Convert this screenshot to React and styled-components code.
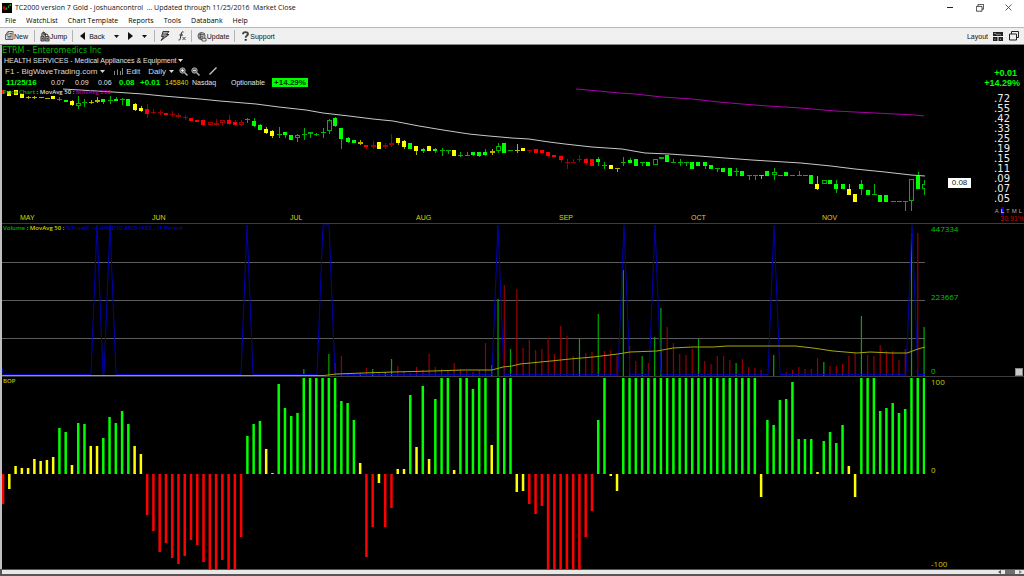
import React from "react";
import styled, { createGlobalStyle } from "styled-components";

const GREEN = "#00ff00";
const YELLOW = "#ffff00";
const RED = "#ff0000";
const HUES = { g: GREEN, y: YELLOW, r: RED };
const DIM = { g: "#00b400", y: "#b4b400", r: "#a00000" };

const Global = createGlobalStyle`
  * { box-sizing: border-box; }
  html, body, #root { height: 100%; }
  body {
    margin: 0;
    background: #000;
    font-family: "Liberation Sans", Arial, sans-serif;
    font-size: 8px;
    overflow: hidden;
  }
  button {
    margin: 0;
    padding: 0;
    border: 0;
    background: none;
    color: inherit;
    font: inherit;
    white-space: nowrap;
  }
  svg { display: block; flex: none; }
`;

/* ---------- window frame ---------- */

const Window = styled.div`
  height: 100vh;
  display: flex;
  flex-direction: column;
  background: #fff;
`;

const TitleBar = styled.header`
  display: flex;
  align-items: center;
  height: 15px;
  padding: 0 12px 0 2px;
  gap: 3px;
  font-family: "Open Sans", sans-serif;
  font-size: 7px;
  line-height: 15px;
  color: #111;
`;

const Caption = styled.h1`
  margin: 0;
  font: inherit;
  white-space: pre;
`;

const WindowButtons = styled.div`
  margin-left: auto;
  display: flex;
  gap: 22px;
`;

const WindowButton = styled.button`
  display: grid;
  place-items: center;
  width: 7px;
  height: 12px;
`;

const MenuBar = styled.nav`
  display: flex;
  align-items: center;
  height: 12px;
  padding-left: 5px;
  gap: 10px;
  font-family: "Open Sans", sans-serif;
  font-size: 7px;
  line-height: 10px;
  color: #000;
`;

const ToolBar = styled.div`
  display: flex;
  align-items: center;
  height: 18px;
  padding: 0 5px;
  border-top: 1px solid #b8b8b8;
  border-bottom: 1px solid #888;
  background: #f0f0f0;
  color: #111;
  font-size: 7px;
`;

const ToolGroup = styled.div`
  display: flex;
  align-items: center;
  gap: ${(p) => p.$gap || 0}px;
  padding: 0 ${(p) => p.$pad || 6}px;
  border-right: ${(p) => (p.$last ? "0" : "1px solid #b4b4b4")};
  height: 12px;
  &:first-child { padding-left: 0; }
`;

const ToolButton = styled.button`
  display: flex;
  align-items: center;
  gap: ${(p) => p.$gap || 0}px;
`;

const LayoutGroup = styled.div`
  margin-left: auto;
  display: flex;
  align-items: center;
  gap: 6px;
`;

const Charts = styled.main`
  flex: 1;
  min-height: 0;
  display: grid;
  grid-template-rows: 178fr 153fr 193fr;
  border-left: 2px solid #c0c0c0;
  background: #000;
`;

const Panel = styled.section`
  min-height: 0;
  display: flex;
  border-top: ${(p) => (p.$divided ? "1px solid #3c3c3c" : "0")};
`;

const Column = styled.div`
  flex: 1;
  min-width: 0;
  display: flex;
  flex-direction: column;
`;

const Axis = styled.div`
  position: relative;
  width: 99px;
  display: flex;
  flex-direction: column;
`;

const Plot = styled.div`
  position: relative;
  flex: 1;
  min-width: 0;
  min-height: 0;
  & > svg {
    width: 100%;
    height: 100%;
  }
`;

/* ---------- price panel ---------- */

const Company = styled.h2`
  margin: 0;
  height: 11px;
  font: 8px/11px "DejaVu Sans", sans-serif;
  color: #00b400;
`;

const Sector = styled.button`
  display: flex;
  align-items: center;
  gap: 2px;
  height: 9px;
  padding-left: 2px;
  font-size: 7px;
  line-height: 9px;
  color: #e0e0e0;
`;

const ChartTools = styled.div`
  display: flex;
  align-items: center;
  height: 12px;
  padding-left: 3px;
  font-size: 8px;
  color: #d8d8d8;
`;

const ChartTool = styled.button`
  display: flex;
  align-items: center;
  gap: 3px;
  margin-right: ${(p) => p.$after || 0}px;
`;

const Quote = styled.div`
  display: flex;
  align-items: center;
  height: 11px;
  padding-left: 4px;
  font-size: 7px;
  line-height: 9px;
  color: #e0e0e0;
`;

const QuoteCell = styled.span`
  width: ${(p) => p.$width}px;
  white-space: nowrap;
  color: ${(p) => p.$color || "inherit"};
  font-weight: ${(p) => (p.$strong ? 700 : 400)};
  font-size: ${(p) => (p.$strong ? 8 : 7)}px;
`;

const Badge = styled.span`
  width: 36px;
  background: ${GREEN};
  color: #003c00;
  font-weight: 700;
  font-size: 8px;
  text-align: center;
`;

const Legend = styled.div`
  position: absolute;
  top: 0;
  left: 1px;
  font: 600 6px/9px "Open Sans", sans-serif;
  white-space: pre;
  color: #ddd;
`;

const Tint = styled.span`
  color: ${(p) => p.$color};
`;

const Months = styled.div`
  display: grid;
  grid-template-columns: 132fr 138fr 126fr 143fr 132fr 131fr 103fr;
  height: 11px;
  padding-left: 18px;
  font: 7px/11px "Liberation Sans", sans-serif;
  color: #d8d800;
`;

const Change = styled.div`
  padding: 23px 4px 6px 0;
  text-align: right;
  font-size: 9px;
  font-weight: 700;
  line-height: 10px;
  color: ${GREEN};
`;

const ChangeLine = styled.div`
  padding-right: ${(p) => (p.$inset ? 3 : 0)}px;
`;

const PriceScale = styled.ol`
  margin: 0;
  padding: 0 14px 3px 0;
  list-style: none;
  text-align: right;
  font: 10px/10px "DejaVu Sans", sans-serif;
  color: #f0f0f0;
`;

const ScaleModes = styled.div`
  display: flex;
  justify-content: flex-end;
  gap: 2px;
  padding-right: 2px;
  font-size: 6px;
  line-height: 8px;
  color: #aaa;
`;

const Mode = styled.button`
  background: ${(p) => (p.$active ? "#0000ff" : "none")};
  color: ${(p) => (p.$active ? "#fff" : "inherit")};
`;

const Percent = styled.div`
  text-align: right;
  font-size: 7px;
  line-height: 7px;
  color: #d00000;
`;

const LastPrice = styled.output`
  position: absolute;
  right: 53px;
  bottom: 35px;
  width: 23px;
  height: 10px;
  background: #fff;
  color: #222;
  text-align: center;
  font-size: 8px;
  line-height: 10px;
`;

/* ---------- lower panels ---------- */

const ScaleColumn = styled(Axis)`
  justify-content: space-between;
  padding-left: 6px;
  font: 8px/10px "Open Sans", sans-serif;
  color: ${(p) => p.$color};
  & > span:nth-child(2) { margin-bottom: 6px; }
`;

const Grip = styled.button`
  && {
    position: absolute;
    right: 1px;
    bottom: 0;
    width: 8px;
    height: 8px;
    background: #c8c8c8;
    border: 1px solid #888;
  }
`;

const ScrollBar = styled.footer`
  display: flex;
  justify-content: flex-end;
  align-items: center;
  height: 7px;
  padding-right: 2px;
  gap: 4px;
  border: 1px solid #555;
  border-width: 1px 0 2px 2px;
  background: #e8e8e8;
`;

const Thumb = styled.span`
  width: 10px;
  height: 4px;
  background: #707070;
`;

/* ---------- data ---------- */

const PITCH = 6.265;
const at = (i) => 1 + i * PITCH;

// colour, body top, body bottom, wick top, wick bottom; an "h" marks a hollow body
const CANDLES = `r 15 27|y 18 33|y 15 31|y 26 39|y 36 39 33 42|y 36 39 33 42|y 36 40|y 38 41|y 33 42|g 41 45 37 47|g 45 52|y 48 60 44 62|gh 54 62 33 73|g 51 55 41 66|y 50 53 45 56|yh 45 52 36 54|g 43 51 41 56|g 44 47 32 56|g 43 47 36 49|g 43 45 40 60|g 42 62|y 57 74 55 77|y 69 78 63 80|r 72 88 56 98|r 82 84 73 86|r 81 84 74 90|r 84 90|r 87 89 79 96|rh 90 97 84 99|r 96 99 90 105|r 99 108|r 105 111|r 105 121 101 123|rh 112 121|rh 115 121 102 123|rh 106 115 104 122|r 105 117 89 119|r 111 121 105 124|rh 110 120 105 124|g 103 106 98 113|g 108 123 99 125|g 121 134 117 136|y 132 144 126 146|y 139 152 135 158|g 147 149 125 158|g 142 150 140 158|g 150 164|gh 150 160 146 170|g 146 150 129 165|gh 142 147 142 158|g 146 149 143 152|g 140 143 129 158|gh 104 139 102 147|g 99 123 97 126|g 129 161 129 192|g 160 171 157 174|g 164 174|yh 170 175 164 181|r 180 186 180 191|rh 180 185 169 191|y 171 192|rh 180 185 173 191|rh 173 180 147 187|y 159 174 159 180|y 169 186 166 191|g 173 191|y 184 197 184 211|g 192 198 189 204|y 184 198|g 191 197 189 203|g 194 197 189 212|g 195 197 195 206|y 196 212|g 209 212 201 216|g 209 212 202 212|g 202 210 200 214|g 202 212 200 215|g 202 211 192 213|yh 197 203 193 210|gh 184 197 173 204|g 173 203|g 195 198|y 194 197 178 204|y 189 198|r 195 198 195 203|r 191 203|r 195 203|r 202 213 200 217|r 209 217|r 214 225 210 232|r 230 233 222 251|r 231 234 222 234|r 222 225 209 232|r 223 233 220 241|r 222 242|g 222 232 216 243|g 239 242 230 251|y 240 251|y 248 251 250 261|g 230 233 215 242|g 224 233 220 234|g 222 242|g 231 234 231 242|g 231 242|gh 223 241|gh 216 223|g 209 232|g 231 234 222 234|g 231 234 222 243|g 231 234 231 242|g 231 251|g 231 242|g 231 242 231 251|g 240 251|g 249 252 249 261|g 250 261|g 250 273|g 259 262 250 272|g 259 273|g 270 273 270 285|g 270 273 270 285|y 270 273 270 283|g 259 272|gh 261 271 250 285|g 270 273|g 261 273|g 270 273|g 270 273 259 273|g 270 273|g 271 298|y 296 312 274 315|gh 284 298|g 284 298|g 296 312 286 325|g 296 312|y 312 329 298 331|y 328 352|g 296 312 285 329|g 314 329|g 327 330 296 330|g 329 352|g 329 352|g 349 352|g 349 352|g 349 352 349 377|gh 283 349 283 377|g 272 312 261 312|gh 297 312 285 329`
  .split("|")
  .map((row) => {
    const [kind, ...levels] = row.split(" ");
    const [top, bottom, high = top, low = bottom] = levels.map((v) => Math.round(Number(v) / 3) - 3);
    return { hue: kind[0], hollow: kind[1] === "h", top, bottom, high, low };
  });

const BOP = `r-30 y-15 y8 y6 y6 y15 y13 y14 y17 g46 g42 y9 g51 g50 y28 y28 g36 g57 g51 g63 g50 y28 y20 r-41 r-57 r-78 r-69 r-84 r-90 r-82 r-66 r-71 r-88 r-96 r-96 r-86 r-96 r-96 r-63 g38 g50 g53 y25 y1 g90 g66 g58 g61 g96 g96 g96 g96 g96 g96 g73 g71 g54 y11 r-83 r-53 y-9 r-53 r-34 y5 y5 g79 y27 g88 y15 g75 g96 g96 y4 g96 g96 g85 g96 g96 y29 g96 g96 g96 y-18 y-17 r-30 r-40 r-32 r-96 r-96 r-96 r-96 r-96 r-96 r-63 r-37 g54 g96 y-2 y-17 g96 g96 g96 g96 g96 g96 g96 g96 g96 g96 g96 g96 g96 g96 g96 g96 g96 g96 g96 g96 g96 g96 y-23 g54 g49 g74 g75 g92 g35 g35 g35 y2 g33 g42 g31 g49 y8 y-23 g96 g96 g96 g63 g66 g71 g61 g65 g96 g96 g96`
  .split(" ")
  .map((s) => ({ hue: s[0], value: Number(s.slice(1)) }));

const FIRST_VOLUME = 39;
const VOLUME = `g1 g0 g0 g0 g0 g2 g0 g0 g0 g7 g0 g0 g1 g22 r13 r20 r3 r3 g3 r8 g7 r3 g4 g17 r10 r5 r3 r9 r6 r22 r9 r7 r5 r13 r7 r5 r4 r6 r33 g11 g77 r91 g27 r87 r28 r36 r26 r27 r38 r22 r50 r40 r20 g37 r23 r24 g62 r25 r26 r20 g106 r30 r15 g20 r13 g39 g68 r49 r33 r22 r21 r27 g37 r15 r12 r20 r20 r16 g13 r17 r9 r8 r6 r0 g21 r0 r4 r6 r9 r7 r7 r18 g14 r10 r10 r12 r20 r23 g60 r21 r20 r31 r25 r25 r16 r27 g142 r143 g49`
  .split(" ")
  .map((s) => ({ hue: s[0], value: Number(s.slice(1)) }));

const AVG_50 =
  "61,1 78,2 111,4 141,6 161,8 198,11 218,13 254,16 277,19 304,22 321,25 347,28 371,31 391,33 417,38 441,42 467,46 487,48 510,50 527,51 547,54 563,56 590,59 620,61 643,65 667,66 697,68 723,70 750,72 766,73 799,75 829,78 853,81 883,84 909,87 923,88";
const AVG_200 =
  "574,1 597,3 617,5 633,6 660,9 690,11 717,14 740,16 766,18 799,20 833,23 873,25 913,27 922,28";
const VOLUME_AVG =
  "0,151.5 322,151.5 334,150 361,149 391,148 430,147 461,146 490,146 501,143 510,142 518,140 549,137 568,135 591,133 616,130 628,128 655,127 671,124 690,123 711,123 725,122 793,122 811,124 831,127 855,129 868,128 890,129 905,129 916,125 923,123";
const FLOOR = 150.5;
const SIGNAL_PEAKS = [[95, 95], [108, 108], [245, 245], [321, 327], [496, 496], [622, 622], [653, 653], [772, 772], [910, 910]];
const SIGNAL = [
  "0,144",
  `1,${FLOOR}`,
  ...SIGNAL_PEAKS.map(([a, b]) => `${a - 6},${FLOOR} ${a},1 ${b},1 ${b + 6},${FLOOR}`),
  `923,${FLOOR}`,
].join(" ");

const PRICES = [".72", ".55", ".42", ".33", ".25", ".19", ".15", ".11", ".09", ".07", ".05"];
const MONTHS = ["MAY", "JUN", "JUL", "AUG", "SEP", "OCT", "NOV"];
const MENUS = ["File", "WatchList", "Chart Template", "Reports", "Tools", "Databank", "Help"];

/* ---------- icons ---------- */

const Caret = ({ color = "currentColor" }) => (
  <svg width="5" height="3" viewBox="0 0 5 3">
    <path d="M0 0h5L2.5 3z" fill={color} />
  </svg>
);

const Arrow = ({ back }) => (
  <svg width="5" height="8" viewBox="0 0 5 8">
    <path d={back ? "M5 0v8L0 4z" : "M0 0v8l5-4z"} fill="#111" />
  </svg>
);

const AppIcon = () => (
  <svg width="10" height="10" viewBox="0 0 10 10">
    <path d="M0 0h10v10H0z" fill="#000" />
    <path d="M1 3.5h2V6H1zM2 6v2" fill="#c00000" stroke="#c00000" strokeWidth=".6" />
    <path d="M3.5 7V4.500h1.500V7zM6 5V2.500h1V5zM7.500 3V1h1.500v2z" fill="#00b000" />
  </svg>
);

const NewIcon = () => (
  <svg width="9" height="10" viewBox="0 0 9 10">
    <path d="M3 .5h5v8H.5V4zM3 .5V4H.500M2.500 5.500h4M2.500 7h4M4.500 2.500h2.500M4.500 4h2.500" fill="#ddd" stroke="#444" strokeWidth=".8" />
  </svg>
);

const JumpIcon = () => (
  <svg width="10" height="11" viewBox="0 0 11 11">
    <path d="M2 5V2l2-1.500L6 2v3M1 5.500h3.500v5H1zM5.500 5.500H10v5H5.500z" fill="#999" stroke="#333" strokeWidth=".9" />
    <path d="M4 3h4l1 2M2 8h1.500M7 8h2M3 1.500h2" fill="none" stroke="#222" />
  </svg>
);

const FlashIcon = () => (
  <svg width="10" height="10" viewBox="0 0 10 10">
    <path d="M3 .5h6L6.500 3.500H9L1 9.500l2.500-4H1.500z" fill="#aaa" stroke="#222" strokeWidth=".9" />
    <path d="M2 3h5M3 5h4" stroke="#333" strokeWidth=".6" />
  </svg>
);

const FunctionIcon = () => (
  <svg width="8" height="10" viewBox="0 0 8 10">
    <path d="M5.500 1C4 .3 3.500 1.500 3.200 3L2.300 7.500C2 9 1.300 9.300.5 9M1.500 4h3.500" fill="none" stroke="#222" />
    <path d="M4.500 6l3 3M7.500 6l-3 3" fill="none" stroke="#222" strokeWidth=".8" />
  </svg>
);

const UpdateIcon = () => (
  <svg width="10" height="11" viewBox="0 0 11 11">
    <circle cx="5" cy="5" r="4" fill="#bbb" stroke="#444" strokeWidth=".8" />
    <path d="M1.500 4c2-2 4 1 7-1.500M2 7c2-2 3 0 5-2M5 1c-2 2-2 6 0 8" fill="none" stroke="#333" strokeWidth=".8" />
    <path d="M5.500 7.500h4.500v3H5.500z" fill="#eee" stroke="#333" strokeWidth=".8" />
  </svg>
);

const SupportIcon = () => (
  <svg width="7" height="10" viewBox="0 0 7 10">
    <path d="M1 3.200C1 .5 6 .5 6 3c0 1.500-2.300 1.700-2.300 3.700" fill="none" stroke="#444" strokeWidth="1.900" />
    <path d="M2.700 8h2v1.700h-2z" fill="#222" />
  </svg>
);

const GridIcon = () => (
  <svg width="10" height="9" viewBox="0 0 10 9">
    <path d="M0 0h10v4H0zM0 5h4.500v4H0zM5.500 5H10v4H5.500z" fill="#222" />
    <path d="M1 1.500h2l1 1.500 2-1 2 1M2 6.500v1.500M7.500 6.500v1.500" stroke="#bbb" strokeWidth=".7" fill="none" />
  </svg>
);

const WindowsIcon = ({ size = 10 }) => (
  <svg width={size} height={size} viewBox="0 0 10 10">
    <path d="M2.500 3V.5h7v6H7.500M.5 3h7v6h-7z" fill="none" stroke="#222" />
  </svg>
);

const BarsIcon = () => (
  <svg width="9" height="7" viewBox="0 0 9 7">
    <path d="M.5 3v4M3.500 1.500V7M6.500 3v4M8.500 0v7" stroke="#888" />
  </svg>
);

const ZoomIcon = ({ sign }) => (
  <svg width="9" height="9" viewBox="0 0 9 9">
    <circle cx="3.500" cy="3.500" r="2.700" fill="#666" stroke="#aaa" />
    <path d={sign === "in" ? "M2 3.500h3M3.500 2v3" : "M2 3.500h3"} stroke="#fff" strokeWidth=".8" />
    <path d="M5.500 5.500l3 3" stroke="#bbb" strokeWidth="1.400" />
  </svg>
);

const PencilIcon = () => (
  <svg width="8" height="8" viewBox="0 0 8 8">
    <path d="M.5 7.500L7.500.5" stroke="#ccc" strokeWidth="1.200" />
  </svg>
);

/* ---------- charts ---------- */

const PriceChart = () => (
  <svg viewBox="0 0 923 124" preserveAspectRatio="none" role="img" aria-label="Price chart">
    {CANDLES.map((c, i) => {
      const x = Math.round(at(i));
      const flat = c.bottom - c.top <= 1;
      return (
        <g key={i}>
          {c.low > c.bottom && <rect x={x} y={c.bottom} width="1" height={c.low - c.bottom} fill={DIM[c.hue]} />}
          {c.high < c.top && <rect x={x} y={c.high} width="1" height={c.top - c.high} fill={DIM[c.hue]} />}
          {c.hollow ? (
            <rect x={x - 1.5} y={c.top + 0.5} width="4" height={Math.max(1, c.bottom - c.top - 1)} fill="#000" stroke={DIM[c.hue]} />
          ) : (
            <rect x={x - 2} y={c.top} width={flat ? 5 : 4} height={Math.max(1, c.bottom - c.top)} fill={flat ? DIM[c.hue] : HUES[c.hue]} />
          )}
        </g>
      );
    })}
    <polyline points={AVG_50} fill="none" stroke="#c8c8c8" />
    <polyline points={AVG_200} fill="none" stroke="#a800a8" />
  </svg>
);

const VolumeChart = () => (
  <svg viewBox="0 0 923 152" preserveAspectRatio="none" role="img" aria-label="Volume chart">
    {[38, 76, 114].map((y) => (
      <rect key={y} y={y} width="923" height="1" fill="#5c5c5c" />
    ))}
    {VOLUME.map((v, i) => (
      <rect key={i} x={at(i + FIRST_VOLUME) - 0.5} y={152 - v.value} width="1.2" height={v.value} fill={v.hue === "g" ? "#00a800" : "#960000"} />
    ))}
    <polyline points={SIGNAL} fill="none" stroke="#0000b0" />
    <polyline points={VOLUME_AVG} fill="none" stroke="#a8a800" />
  </svg>
);

const BopChart = () => (
  <svg viewBox="0 0 923 192" preserveAspectRatio="none" role="img" aria-label="Balance of power chart">
    {BOP.map((b, i) => (
      <rect key={i} x={at(i) - 1.2} y={b.value > 0 ? 97 - b.value : 97} width="2.5" height={Math.abs(b.value)} fill={HUES[b.hue]} />
    ))}
  </svg>
);

export default function App() {
  return (
    <Window>
      <Global />
      <TitleBar>
        <AppIcon />
        <Caption>{"TC2000 version 7 Gold - joshuancontrol  ... Updated through 11/25/2016  Market Close"}</Caption>
        <WindowButtons>
          <WindowButton aria-label="Minimize">
            <svg width="7" height="7" viewBox="0 0 7 7"><path d="M0 3.500h6" stroke="#222" /></svg>
          </WindowButton>
          <WindowButton aria-label="Restore"><WindowsIcon size={8} /></WindowButton>
          <WindowButton aria-label="Close">
            <svg width="7" height="7" viewBox="0 0 7 7"><path d="M.5.5l6 6M6.500.5l-6 6" stroke="#333" strokeWidth=".8" /></svg>
          </WindowButton>
        </WindowButtons>
      </TitleBar>

      <MenuBar>
        {MENUS.map((m) => (
          <button key={m}>{m}</button>
        ))}
      </MenuBar>

      <ToolBar>
        <ToolGroup>
          <ToolButton><NewIcon />New</ToolButton>
        </ToolGroup>
        <ToolGroup $pad={5}>
          <ToolButton><JumpIcon />Jump</ToolButton>
        </ToolGroup>
        <ToolGroup $pad={7} $gap={9}>
          <ToolButton $gap={4}><Arrow back />Back</ToolButton>
          <ToolButton aria-label="Back history"><Caret /></ToolButton>
          <ToolButton aria-label="Forward"><Arrow /></ToolButton>
          <ToolButton aria-label="Forward history"><Caret /></ToolButton>
        </ToolGroup>
        <ToolGroup $gap={8} $pad={5}>
          <ToolButton aria-label="Quick actions"><FlashIcon /></ToolButton>
          <ToolButton aria-label="Formulas"><FunctionIcon /></ToolButton>
        </ToolGroup>
        <ToolGroup $pad={5}>
          <ToolButton><UpdateIcon />Update</ToolButton>
        </ToolGroup>
        <ToolGroup $last $pad={7}>
          <ToolButton $gap={1}><SupportIcon />Support</ToolButton>
        </ToolGroup>
        <LayoutGroup>
          <ToolButton $gap={5}>Layout<GridIcon /></ToolButton>
          <ToolButton aria-label="Windows"><WindowsIcon /></ToolButton>
        </LayoutGroup>
      </ToolBar>

      <Charts>
        <Panel>
          <Column>
            <Company>ETRM - Enteromedics Inc</Company>
            <Sector>HEALTH SERVICES - Medical Appliances &amp; Equipment<Caret /></Sector>
            <ChartTools>
              <ChartTool $after={9}>F1 - BigWaveTrading.com<Caret /></ChartTool>
              <ChartTool $after={8}><BarsIcon />Edit</ChartTool>
              <ChartTool $after={5}>Daily<Caret /></ChartTool>
              <ChartTool $after={3} aria-label="Zoom in"><ZoomIcon sign="in" /></ChartTool>
              <ChartTool $after={9} aria-label="Zoom out"><ZoomIcon sign="out" /></ChartTool>
              <ChartTool aria-label="Draw"><PencilIcon /></ChartTool>
            </ChartTools>
            <Quote>
              <QuoteCell $width={45} $color={GREEN} $strong>11/25/16</QuoteCell>
              <QuoteCell $width={24}>0.07</QuoteCell>
              <QuoteCell $width={23}>0.09</QuoteCell>
              <QuoteCell $width={21}>0.06</QuoteCell>
              <QuoteCell $width={21} $color={GREEN} $strong>0.08</QuoteCell>
              <QuoteCell $width={25} $color={GREEN} $strong>+0.01</QuoteCell>
              <QuoteCell $width={27} $color="#d8d800">145840</QuoteCell>
              <QuoteCell $width={39}>Nasdaq</QuoteCell>
              <QuoteCell $width={41}>Optionable</QuoteCell>
              <Badge>+14.29%</Badge>
            </Quote>
            <Plot>
              <PriceChart />
              <Legend>
                <Tint $color="#00b400">Price Chart</Tint> : MovAvg 50 : <Tint $color="#b000b0">MovAvg 200</Tint>
              </Legend>
            </Plot>
            <Months>
              {MONTHS.map((m) => (
                <span key={m}>{m}</span>
              ))}
            </Months>
          </Column>
          <Axis>
            <Change>
              <ChangeLine $inset>+0.01</ChangeLine>
              <ChangeLine>+14.29%</ChangeLine>
            </Change>
            <PriceScale>
              {PRICES.map((p) => (
                <li key={p}>{p}</li>
              ))}
            </PriceScale>
            <ScaleModes>
              <Mode>A</Mode>
              <Mode $active>L</Mode>
              <Mode>T</Mode>
              <Mode>M</Mode>
              <Mode>L</Mode>
            </ScaleModes>
            <Percent>30.91%</Percent>
            <LastPrice>0.08</LastPrice>
          </Axis>
        </Panel>

        <Panel $divided>
          <Plot>
            <VolumeChart />
            <Legend>
              <Tint $color="#00b400">Volume</Tint> : <Tint $color="#d0d000">MovAvg 50</Tint> : <Tint $color="#0000c8">{"%True(C >= AVGC10 AND (ABS...)1 Period"}</Tint>
            </Legend>
          </Plot>
          <ScaleColumn $color="#00c800">
            <span>447334</span>
            <span>223667</span>
            <span>0</span>
            <Grip aria-label="Resize panel" />
          </ScaleColumn>
        </Panel>

        <Panel $divided>
          <Plot>
            <BopChart />
            <Legend>
              <Tint $color="#c8c800">BOP</Tint>
            </Legend>
          </Plot>
          <ScaleColumn $color="#c8c800">
            <span>100</span>
            <span>0</span>
            <span>-100</span>
          </ScaleColumn>
        </Panel>
      </Charts>

      <ScrollBar>
        <svg width="3" height="4" viewBox="0 0 3 4"><path d="M3 0v4L0 2z" fill="#555" /></svg>
        <Thumb />
        <svg width="3" height="4" viewBox="0 0 3 4"><path d="M0 0v4l3-2z" fill="#888" /></svg>
      </ScrollBar>
    </Window>
  );
}
